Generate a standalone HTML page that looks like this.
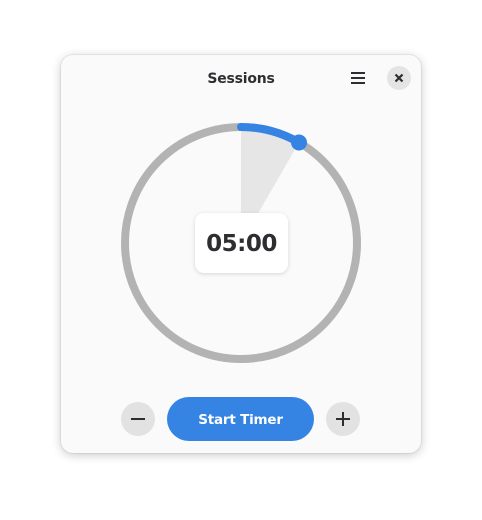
<!DOCTYPE html>
<html><head><style>
body{margin:0;width:482px;height:520px;background:#fff;font-family:"Liberation Sans","DejaVu Sans",sans-serif;position:relative;overflow:hidden}
.win{position:absolute;left:61px;top:55px;width:360px;height:398px;background:#fafafa;border-radius:12px;box-shadow:0 2px 10px rgba(0,0,0,.22),0 0 0 1px rgba(0,0,0,.05)}
.title{position:absolute;left:0;right:0;top:16px;text-align:center;font-weight:bold;font-size:14px;color:#2e2e32;font-family:"DejaVu Sans",sans-serif;letter-spacing:-0.2px}
.close{position:absolute;left:326px;top:11px;width:24px;height:24px;border-radius:50%;background:#e4e4e4}
.box{position:absolute;left:134px;top:158px;width:93px;height:60px;background:#fff;border-radius:9px;box-shadow:0 1px 4px rgba(0,0,0,.15);text-align:center;line-height:62px;font-weight:bold;font-size:23px;color:#2e2e32;font-family:"DejaVu Sans",sans-serif;letter-spacing:-0.5px}
.rb{position:absolute;top:347px;width:34px;height:34px;border-radius:50%;background:#e2e2e2}
.start{position:absolute;left:106px;top:342px;width:147px;height:44px;border-radius:22px;background:#3584e4;color:#fff;font-weight:bold;font-size:13.5px;text-align:center;line-height:46px;font-family:"DejaVu Sans",sans-serif;letter-spacing:-0.2px}
</style></head><body>
<div class="win">
<div class="title">Sessions</div>
<svg style="position:absolute;left:289px;top:16px" width="16" height="14"><path d="M1 2H15M1 7H15M1 12H15" stroke="#2e2e32" stroke-width="2"/></svg>
<div class="close"><svg width="24" height="24"><path d="M8.5 8.5L15.5 15.5M15.5 8.5L8.5 15.5" stroke="#2e2e32" stroke-width="2.2"/></svg></div>
<svg style="position:absolute;left:0;top:0" width="360" height="398">
<path d="M180 188 L180 72 A116 116 0 0 1 238 87.5 Z" fill="#e6e6e6"/>
<circle cx="180" cy="188" r="116" fill="none" stroke="#b3b3b3" stroke-width="8"/>
<path d="M180 72 A116 116 0 0 1 238 87.5" fill="none" stroke="#3584e4" stroke-width="8" stroke-linecap="round"/>
<circle cx="238" cy="87.5" r="8" fill="#3584e4"/>
</svg>
<div class="box">05:00</div>
<div class="rb" style="left:60px"><svg width="34" height="34"><path d="M10 17H24" stroke="#2e2e32" stroke-width="2"/></svg></div>
<div class="start">Start Timer</div>
<div class="rb" style="left:265px"><svg width="34" height="34"><path d="M10 17H24M17 10V24" stroke="#2e2e32" stroke-width="2"/></svg></div>
</div>
</body></html>
